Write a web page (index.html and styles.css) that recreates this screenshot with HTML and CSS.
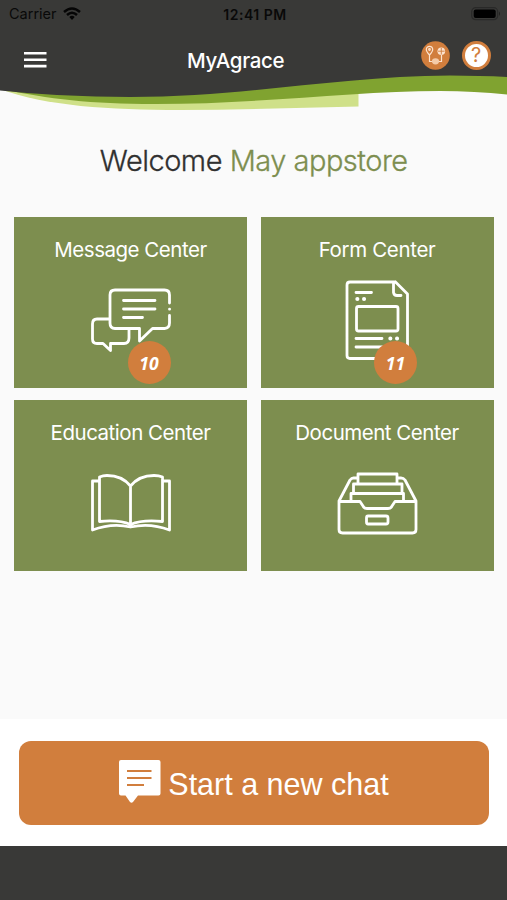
FILE: index.html
```html
<!DOCTYPE html>
<html lang="en">
<head>
<meta charset="utf-8">
<title>MyAgrace</title>
<link rel="stylesheet" href="styles.css">
</head>
<body>
<div class="app">
  <header class="header">
    <svg class="wave" viewBox="0 0 507 112" aria-hidden="true">
      <path d="M0 89C45 106 110 110 180 110Q270 109 358.500 106.500V80H0Z" fill="#cfe089"/>
      <path d="M0 89C50 99 90 104 155 104C260 104 355 91 440 91Q475 91 507 94.500V60H0Z" fill="#80a330"/>
      <path d="M0 0H507V77Q480 75.500 450 75.500C340 76 245 97 130 97Q60 97 0 90.500Z" fill="#393937"/>
    </svg>
    <div class="status">
      <div class="carrier"><span>Carrier</span>
        <svg width="18" height="14" viewBox="0 0 18 14" fill="none" stroke="#050505" stroke-width="2.500"><path d="M1 5Q9-2 17 5M4 8Q9 3.500 14 8"/><path d="M6.300 10Q9 7.700 11.700 10L9 13Z" fill="#050505" stroke="none"/></svg>
      </div>
      <span class="clock">12:41 PM</span>
      <svg class="battery" width="30" height="14" viewBox="0 0 30 14"><rect x=".7" y=".7" width="26" height="12" rx="4" fill="none" stroke="#292928" stroke-width="1.200"/><rect x="2.700" y="2.500" width="22" height="8.500" rx="2" fill="#000"/><path d="M28 4.500Q30 6.700 28 9Z" fill="#20201f"/></svg>
    </div>
    <nav class="navbar">
      <svg class="menu" width="23" height="16" viewBox="0 0 23 16" fill="#fff"><path d="M0 0H22.500V2.600H0ZM0 6.400H22.500V9H0ZM0 12.800H22.500V15.400H0Z"/></svg>
      <h1 class="title">MyAgrace</h1>
      <div class="actions">
        <svg width="29" height="29" viewBox="0 0 29 29"><circle cx="14.500" cy="14.500" r="14.300" fill="#d17e3d"/><g fill="none" stroke="#fbe3d0" stroke-width="1.200"><path d="M8.500 14Q5.300 10.500 5.300 8.500A3.200 3.200 0 0 1 11.700 8.500Q11.700 10.500 8.500 14V20.500H11M18 20.500H20.500V14"/><circle cx="8.500" cy="8.500" r=".8"/></g><circle cx="20.300" cy="10.200" r="3.800" fill="#fbe3d0"/><path d="M17 10.200H23.600M20.300 7V13.500" stroke="#d17e3d" stroke-width=".9"/><ellipse cx="14.500" cy="20.300" rx="3.600" ry="3.100" fill="#f4cba9"/></svg>
        <span class="help">?</span>
      </div>
    </nav>
  </header>
  <main class="main">
    <h2 class="welcome"><span>Welcome</span> <span class="name">May appstore</span></h2>
    <div class="grid">
      <a class="card"><span class="label message">Message Center</span>
        <svg class="icon" width="110" height="105" viewBox="76 275 110 105"><path d="M169.500 303V295Q169.500 290 164.500 290H115Q110 290 110 295V323Q110 328.500 115 328.500H139.500V341L152.500 328.500H164.500Q169.500 328 169.500 323V315.500M169.500 309.200h.1M123.500 300.500H155M123.500 309H155M123.500 317.500H142.500M109.500 319H97Q92.500 319 92.500 324V339Q92.500 343.500 97 343.500H103L110.500 350.500V343.500H124Q129 343.500 129 338V329"/></svg>
        <span class="badge">10</span></a>
      <a class="card"><span class="label form">Form Center</span>
        <svg class="icon form-icon" width="110" height="105" viewBox="322 275 110 105"><path d="M395.500 282H350Q347 282 347 285V355.500Q347 358.500 350 358.500H404.500Q407.500 358.500 407.500 355.500V294ZM395.500 282L393.500 283V292.500Q394 295.500 397 295.500H401M356 292.500H371.500M358.500 306.500H396Q398 306.500 398 308.500V329Q398 331 396 331H358.500Q356.500 331 356.500 329V308.500Q356.500 306.500 358.500 306.500ZM356 338.500H382M356 347H382"/><path d="M357.300 299h.1M364 299h.1M390.300 338.500h.1M397 338.500h.1" stroke-width="4"/></svg>
        <span class="badge">11</span></a>
      <a class="card"><span class="label education">Education Center</span>
        <svg class="icon" width="110" height="105" viewBox="76 458.500 110 105"><path d="M130.500 525V486.500Q122 476 107 476Q103 476 99.500 477.500V522Q119 520 130.500 525ZM130.500 486.500Q139 476 154 476Q159 476 162.500 477.500V522Q142 520 130.500 525M99 481.500H92.500V530.500Q112 523 130.500 527.500Q150 523 169.500 530.500V481.500H163"/></svg></a>
      <a class="card"><span class="label document">Document Center</span>
        <svg class="icon" width="110" height="105" viewBox="322 458.500 110 105"><path d="M358 484V474.500H397V484M353.500 493V484.500H402V493M351 501V494H403.500V501M357 478.500H353.500Q351.500 478.500 350 480.500L339 501.500V530Q339 533.500 342.500 533.500H412.500Q416 533.500 416 530V501.500L405 480.500Q403.500 478.500 401 478.500H398M339 502H360L363 506.500Q364 509 367 509H388Q391 509 392 506.500L395 502H416M368 516.500H386Q388 516.500 388 518.500V522.500Q388 524.500 386 524.500H368Q366.500 524.500 366.500 522.500V518.500Q366.500 516.500 368 516.500Z"/></svg></a>
    </div>
  </main>
  <section class="chat">
    <button class="start">
      <svg width="42" height="44" viewBox="0 0 42 44"><path d="M2 0H39.500Q41.500 0 41.500 2V33.500Q41.500 35.500 39.500 35.500H19L14 42Q12.500 43.500 11 42L6.500 35.500H2Q0 35.500 0 33.500V2Q0 0 2 0Z" fill="#fff"/><path d="M8 11H32.500M8 18H32.500M8 25H25" stroke="#d17e3d" stroke-width="2.200"/></svg>
      <span>Start a new chat</span>
    </button>
  </section>
  <footer class="footer"></footer>
</div>
</body>
</html>
```
FILE: styles.css
```css
* { box-sizing: border-box; }
body { margin: 0; font-family: Inter, "Liberation Sans", sans-serif; background: #fafafa; }
.app { width: 507px; height: 900px; display: flex; flex-direction: column; overflow: hidden; }
.header { position: relative; height: 112px; flex: none; }
.wave { position: absolute; left: 0; top: 0; width: 507px; height: 112px; }
.status { position: relative; height: 28px; display: grid; grid-template-columns: 1fr auto 1fr; align-items: center; padding: 0 6px 0 9px; font-size: 14.500px; color: #090909; }
.carrier { display: flex; align-items: center; gap: 6px; margin-top: -1px; }
.clock { font-weight: 600; font-size: 14px; letter-spacing: .5px; }
.battery { justify-self: end; margin-top: -1px; }
.navbar { position: relative; height: 62px; display: grid; grid-template-columns: 163px auto 1fr; align-items: center; padding: 0 16.500px 0 24px; color: #fff; }
.title { margin: 2px 0 0; font-size: 20.500px; font-weight: 500; letter-spacing: -.3px; }
.menu { margin-top: 1px; }
.actions { display: flex; gap: 12px; justify-self: end; margin-top: -8px; }
.help { width: 29px; height: 29px; border: 3.500px solid #d17e3d; border-radius: 50%; background: #fff; color: #d17e3d; font-size: 20px; line-height: 23px; text-align: center; }
.main { flex: 1; padding: 0 13.500px 0 14px; }
.welcome { height: 105px; margin: 0; padding-top: 31px; font-size: 29px; line-height: 36px; font-weight: 300; letter-spacing: -.5px; text-align: center; color: #303030; white-space: nowrap; -webkit-text-stroke: .3px; }
.name { color: #7d8e4f; }
.grid { display: grid; grid-template-columns: 1fr 1fr; grid-auto-rows: 171px; gap: 12.400px 13.500px; }
.card { position: relative; display: flex; flex-direction: column; align-items: center; background: #7d8e4f; color: #fff; }
.label { height: 58px; padding-top: 18.600px; font-size: 20.500px; line-height: 28px; letter-spacing: -.48px; white-space: nowrap; }
.form { letter-spacing: -.35px; }
.icon { fill: none; stroke: #fff; stroke-width: 2.800; stroke-linecap: round; stroke-linejoin: round; flex: none; }
.badge { position: absolute; left: 113.500px; top: 123.500px; width: 43px; height: 43px; border-radius: 50%; background: #d17e3d; font: italic 700 17.500px/44px "Open Sans", sans-serif; text-align: center; }
.chat { height: 127px; flex: none; background: #fff; padding: 22px 18px 21px 19px; }
.start { width: 100%; height: 84px; border: 0; border-radius: 12px; background: #d17e3d; color: #fff; display: flex; align-items: center; justify-content: center; gap: 7px; font: 30.500px "Liberation Sans", sans-serif; padding: 3px 6px 0; }
.start svg { margin-top: -6px; }
.footer { height: 54px; flex: none; background: #393937; }
```
